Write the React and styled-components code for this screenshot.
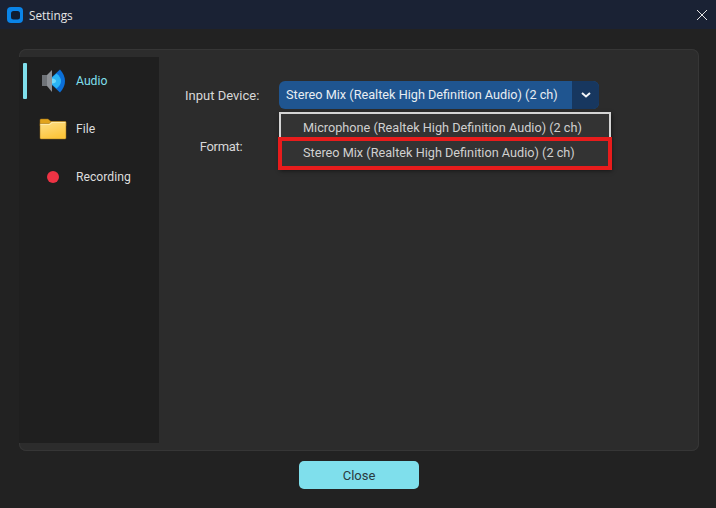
import React from 'react';
import styled, { createGlobalStyle } from 'styled-components';

const GlobalStyle = createGlobalStyle`
  html, body {
    margin: 0;
    padding: 0;
    background: #222222;
  }
  * {
    box-sizing: border-box;
  }
`;

const devices = [
  'Microphone (Realtek High Definition Audio) (2 ch)',
  'Stereo Mix (Realtek High Definition Audio) (2 ch)',
];

const LogoIcon = () => (
  <svg width="16" height="16" viewBox="0 0 16 16">
    <rect width="16" height="16" rx="4" fill="#0a84e8" />
    <rect x="4" y="4" width="9" height="8.5" rx="2.5" fill="#101c30" />
  </svg>
);

const CloseIcon = () => (
  <svg width="12" height="12" viewBox="0 0 12 12">
    <path d="M1 1 L11 11 M11 1 L1 11" stroke="#e4e4e4" strokeWidth="1" fill="none" />
  </svg>
);

const SpeakerIcon = () => (
  <svg width="24" height="24" viewBox="0 0 24 24">
    <rect x="1" y="6" width="5" height="11" fill="#6f7378" />
    <path d="M6 6 L11 1 V23 L6 17 Z" fill="#8d9196" />
    <path d="M11 8 L19 0.5 Q24 6 24 12 Q24 18 19 23.5 L11 16 Z" fill="#0b6fd8" />
    <path d="M11 8.5 L15.5 4.5 Q20 8 20 12 Q20 16 15.5 19.5 L11 15.5 Z" fill="#2ab4f5" />
    <path d="M11 9.5 Q15 10 15 12 Q15 14 11 14.5 Z" fill="#6fd8fa" />
  </svg>
);

const FolderIcon = () => (
  <svg width="28" height="22" viewBox="0 0 28 22">
    <defs>
      <linearGradient id="folderBody" x1="0" y1="0" x2="0.4" y2="1">
        <stop offset="0" stopColor="#fde08a" />
        <stop offset="1" stopColor="#fdc63c" />
      </linearGradient>
    </defs>
    <path d="M1 2 Q1 1 2 1 H9 L12 3.5 H26 Q27 3.5 27 4.5 V8 H1 Z" fill="#e2a41c" stroke="#9a6f18" strokeWidth="0.5" />
    <path d="M1 5.5 H10 L12.5 3.5 H26 Q27 3.5 27 4.5 V20 Q27 21 26 21 H2 Q1 21 1 20 Z" fill="url(#folderBody)" stroke="#9a6f18" strokeWidth="0.5" />
    <path d="M1.5 6.2 H10.4 L12.8 4.2 H26.4 V5 H13 L10.6 7 H1.5 Z" fill="#ffefb8" />
  </svg>
);

const RecordIcon = () => (
  <svg width="12" height="12" viewBox="0 0 12 12">
    <circle cx="6" cy="6" r="6" fill="#ee3344" />
  </svg>
);

const ChevronIcon = () => (
  <svg width="10" height="6" viewBox="0 0 10 6">
    <path d="M1 1 L5 4.5 L9 1" stroke="#f2f5f8" strokeWidth="2" fill="none" />
  </svg>
);

const App = () => {
  return (
    <Page>
      <GlobalStyle />
      <TitleBar>
        <TitleLeft>
          <LogoIcon />
          <TitleText>Settings</TitleText>
        </TitleLeft>
        <CloseIcon />
      </TitleBar>
      <Body>
        <Panel>
          <Sidebar>
            <NavItem $active>
              <NavIcon><SpeakerIcon /></NavIcon>
              <NavLabel $active>Audio</NavLabel>
            </NavItem>
            <NavItem>
              <NavIcon><FolderIcon /></NavIcon>
              <NavLabel>File</NavLabel>
            </NavItem>
            <NavItem>
              <NavIcon><RecordIcon /></NavIcon>
              <NavLabel>Recording</NavLabel>
            </NavItem>
          </Sidebar>
          <Content>
            <FormRow>
              <FieldLabel>Input Device:</FieldLabel>
              <ComboWrap>
                <Combo>
                  <ComboValue>{devices[1]}</ComboValue>
                  <ComboArrow><ChevronIcon /></ComboArrow>
                </Combo>
                <Popup>
                  {devices.map((device) => (
                    <PopupItem key={device}>{device}</PopupItem>
                  ))}
                </Popup>
                <Highlight />
              </ComboWrap>
            </FormRow>
            <FormatRow>
              <FormatLabel>Format:</FormatLabel>
            </FormatRow>
          </Content>
        </Panel>
        <Footer>
          <CloseButton>Close</CloseButton>
        </Footer>
      </Body>
    </Page>
  );
};

// Styled components
const Page = styled.div`
  width: 716px;
  height: 508px;
  overflow: hidden;
  display: flex;
  flex-direction: column;
  background: #222222;
  font-family: 'Roboto', sans-serif;
  font-size: 13px;
  color: #d8d8d8;
`;

const TitleBar = styled.div`
  height: 29px;
  flex: none;
  display: flex;
  align-items: center;
  justify-content: space-between;
  padding: 0 8px 0 7px;
  background: #1a2234;
`;

const TitleLeft = styled.div`
  display: flex;
  align-items: center;
  gap: 6px;
`;

const TitleText = styled.span`
  font-family: 'Open Sans', sans-serif;
  font-size: 11.8px;
  color: #e6e6e6;
`;

const Body = styled.div`
  flex: 1;
  display: flex;
  flex-direction: column;
  padding: 20px 17px 0 19px;
`;

const Panel = styled.div`
  height: 402px;
  display: flex;
  padding: 8px 0;
  background: #2c2c2c;
  box-shadow: inset 0 0 0 1px #363636;
  border-radius: 7px;
`;

const Sidebar = styled.div`
  width: 140px;
  flex: none;
  background: #1f1f1f;
  padding-top: 6px;
  display: flex;
  flex-direction: column;
  gap: 12px;
`;

const NavItem = styled.div`
  height: 36px;
  display: flex;
  align-items: center;
  position: relative;

  &::before {
    content: '';
    position: absolute;
    left: 4px;
    top: 0;
    width: 4px;
    height: 36px;
    border-radius: 1px;
    background: ${(props) => (props.$active ? '#7fdfec' : 'transparent')};
  }
`;

const NavIcon = styled.div`
  width: 30px;
  margin-left: 19px;
  margin-right: 8px;
  display: flex;
  align-items: center;
  justify-content: center;
`;

const NavLabel = styled.span`
  font-size: 12.2px;
  padding-bottom: 1px;
  color: ${(props) => (props.$active ? '#7fdfec' : '#dcdcdc')};
`;

const Content = styled.div`
  flex: 1;
  padding: 24px 0 0 26px;
  display: flex;
  flex-direction: column;
`;

const FormRow = styled.div`
  height: 28px;
  display: flex;
  align-items: center;
  gap: 20px;
`;

const FormatRow = styled(FormRow)`
  margin-top: 23px;
`;

const FieldLabel = styled.div`
  width: 74px;
  text-align: center;
  white-space: nowrap;
  color: #d8d8d8;
`;

const FormatLabel = styled(FieldLabel)`
  padding-right: 2px;
  letter-spacing: -0.3px;
`;

const ComboWrap = styled.div`
  position: relative;
  width: 320px;
  height: 28px;
`;

const Combo = styled.div`
  height: 28px;
  display: flex;
  border-radius: 6px;
  overflow: hidden;
  background: #1f5590;
`;

const ComboValue = styled.div`
  flex: 1;
  padding-left: 7px;
  font-size: 12.7px;
  line-height: 28px;
  white-space: nowrap;
  color: #e8edf2;
`;

const ComboArrow = styled.div`
  width: 27px;
  display: flex;
  align-items: center;
  justify-content: center;
  background: #17375f;
`;

const Popup = styled.div`
  position: absolute;
  left: 0;
  top: 31px;
  width: 332px;
  height: 57px;
  padding-top: 1px;
  background: #333333;
  border: 2px solid #d4d4d4;
  border-bottom: none;
  box-shadow: 1px 2px 4px rgba(0, 0, 0, 0.5);
`;

const PopupItem = styled.div`
  height: 25px;
  padding-left: 22px;
  font-size: 12.7px;
  line-height: 25px;
  white-space: nowrap;
  color: #d0d0d0;
`;

const Highlight = styled.div`
  position: absolute;
  left: -1px;
  top: 56px;
  width: 334px;
  height: 33px;
  border: 4px solid #e81c1c;
`;

const Footer = styled.div`
  display: flex;
  justify-content: center;
  padding-top: 10px;
`;

const CloseButton = styled.button`
  width: 120px;
  height: 28px;
  padding: 0;
  border: none;
  border-radius: 5px;
  background: #7fdfec;
  font-family: 'Roboto', sans-serif;
  font-size: 13px;
  color: #2a3a40;
`;

export default App;
